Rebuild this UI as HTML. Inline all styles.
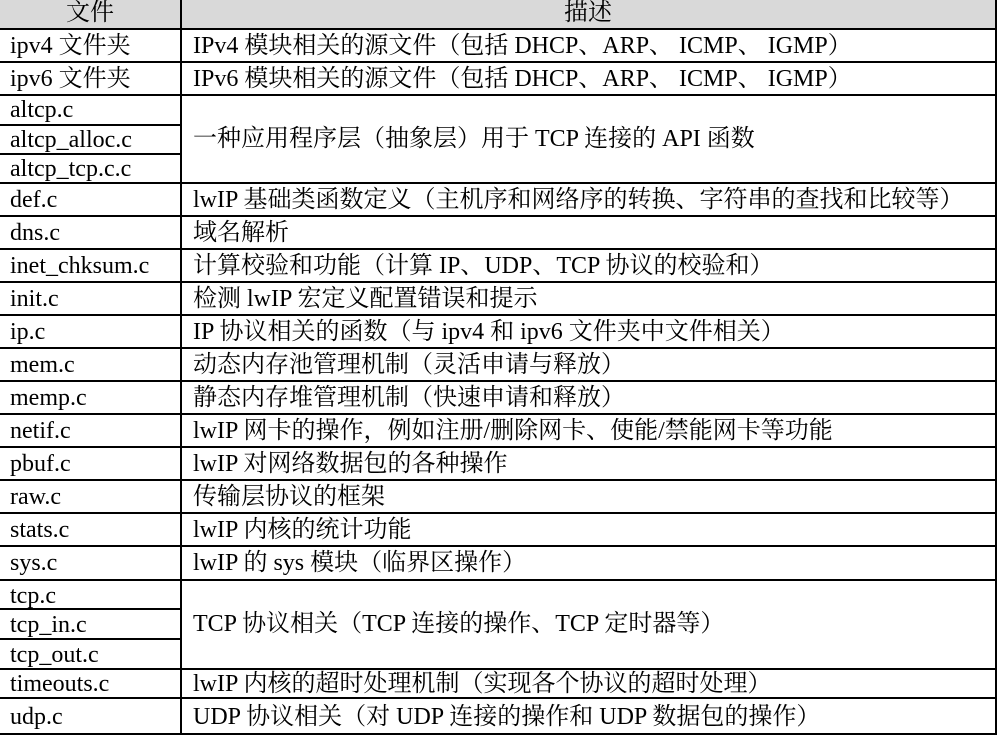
<!DOCTYPE html>
<html><head><meta charset="utf-8"><style>
body{margin:0;width:999px;height:735px;background:#fff;position:relative;overflow:hidden;font-family:"Liberation Serif","Noto Serif CJK SC",serif;font-size:24px;color:#000}
.h{position:absolute;left:0;width:997px;height:2px;background:#000}
.v{position:absolute;width:2px;background:#000}
.t{position:absolute;white-space:nowrap;line-height:26px}
</style></head><body>
<div style="position:absolute;left:0;top:0;width:995px;height:28px;background:#d9d9d9"></div>
<div class="v" style="left:180px;top:0;height:735px"></div>
<div class="v" style="left:995px;top:0;height:735px"></div>
<div class="h" style="top:28px"></div>
<div class="h" style="top:61px"></div>
<div class="h" style="top:94px"></div>
<div class="h" style="top:124px;width:181px"></div>
<div class="h" style="top:153px;width:181px"></div>
<div class="h" style="top:182px"></div>
<div class="h" style="top:215px"></div>
<div class="h" style="top:248px"></div>
<div class="h" style="top:281px"></div>
<div class="h" style="top:314px"></div>
<div class="h" style="top:347px"></div>
<div class="h" style="top:380px"></div>
<div class="h" style="top:413px"></div>
<div class="h" style="top:446px"></div>
<div class="h" style="top:479px"></div>
<div class="h" style="top:512px"></div>
<div class="h" style="top:545px"></div>
<div class="h" style="top:579px"></div>
<div class="h" style="top:608px;width:181px"></div>
<div class="h" style="top:638px;width:181px"></div>
<div class="h" style="top:668px"></div>
<div class="h" style="top:697px"></div>
<div class="h" style="top:733px"></div>

<div class="t" style="left:66px;top:0px">文件</div>
<div class="t" style="left:564px;top:0px">描述</div>

<div class="t" style="left:10px;top:33px">ipv4 文件夹</div>
<div class="t" style="left:193px;top:33px">IPv4 模块相关的源文件（包括 DHCP、ARP、 ICMP、 IGMP）</div>
<div class="t" style="left:10px;top:66px">ipv6 文件夹</div>
<div class="t" style="left:193px;top:66px">IPv6 模块相关的源文件（包括 DHCP、ARP、 ICMP、 IGMP）</div>
<div class="t" style="left:10px;top:97px">altcp.c</div>
<div class="t" style="left:10px;top:127px">altcp_alloc.c</div>
<div class="t" style="left:10px;top:156px">altcp_tcp.c.c</div>
<div class="t" style="left:193px;top:126px">一种应用程序层（抽象层）用于 TCP 连接的 API 函数</div>
<div class="t" style="left:10px;top:187px">def.c</div>
<div class="t" style="left:193px;top:187px">lwIP 基础类函数定义（主机序和网络序的转换、字符串的查找和比较等）</div>
<div class="t" style="left:10px;top:220px">dns.c</div>
<div class="t" style="left:193px;top:220px">域名解析</div>
<div class="t" style="left:10px;top:253px">inet_chksum.c</div>
<div class="t" style="left:193px;top:253px">计算校验和功能（计算 IP、UDP、TCP 协议的校验和）</div>
<div class="t" style="left:10px;top:286px">init.c</div>
<div class="t" style="left:193px;top:286px">检测 lwIP 宏定义配置错误和提示</div>
<div class="t" style="left:10px;top:319px">ip.c</div>
<div class="t" style="left:193px;top:319px">IP 协议相关的函数（与 ipv4 和 ipv6 文件夹中文件相关）</div>
<div class="t" style="left:10px;top:352px">mem.c</div>
<div class="t" style="left:193px;top:352px">动态内存池管理机制（灵活申请与释放）</div>
<div class="t" style="left:10px;top:385px">memp.c</div>
<div class="t" style="left:193px;top:385px">静态内存堆管理机制（快速申请和释放）</div>
<div class="t" style="left:10px;top:418px">netif.c</div>
<div class="t" style="left:193px;top:418px">lwIP 网卡的操作，例如注册/删除网卡、使能/禁能网卡等功能</div>
<div class="t" style="left:10px;top:451px">pbuf.c</div>
<div class="t" style="left:193px;top:451px">lwIP 对网络数据包的各种操作</div>
<div class="t" style="left:10px;top:484px">raw.c</div>
<div class="t" style="left:193px;top:484px">传输层协议的框架</div>
<div class="t" style="left:10px;top:517px">stats.c</div>
<div class="t" style="left:193px;top:517px">lwIP 内核的统计功能</div>
<div class="t" style="left:10px;top:550px">sys.c</div>
<div class="t" style="left:193px;top:550px">lwIP 的 sys 模块（临界区操作）</div>
<div class="t" style="left:10px;top:583px">tcp.c</div>
<div class="t" style="left:10px;top:612px">tcp_in.c</div>
<div class="t" style="left:10px;top:642px">tcp_out.c</div>
<div class="t" style="left:193px;top:611px">TCP 协议相关（TCP 连接的操作、TCP 定时器等）</div>
<div class="t" style="left:10px;top:671px">timeouts.c</div>
<div class="t" style="left:193px;top:671px">lwIP 内核的超时处理机制（实现各个协议的超时处理）</div>
<div class="t" style="left:10px;top:704px">udp.c</div>
<div class="t" style="left:193px;top:704px">UDP 协议相关（对 UDP 连接的操作和 UDP 数据包的操作）</div>
</body></html>
